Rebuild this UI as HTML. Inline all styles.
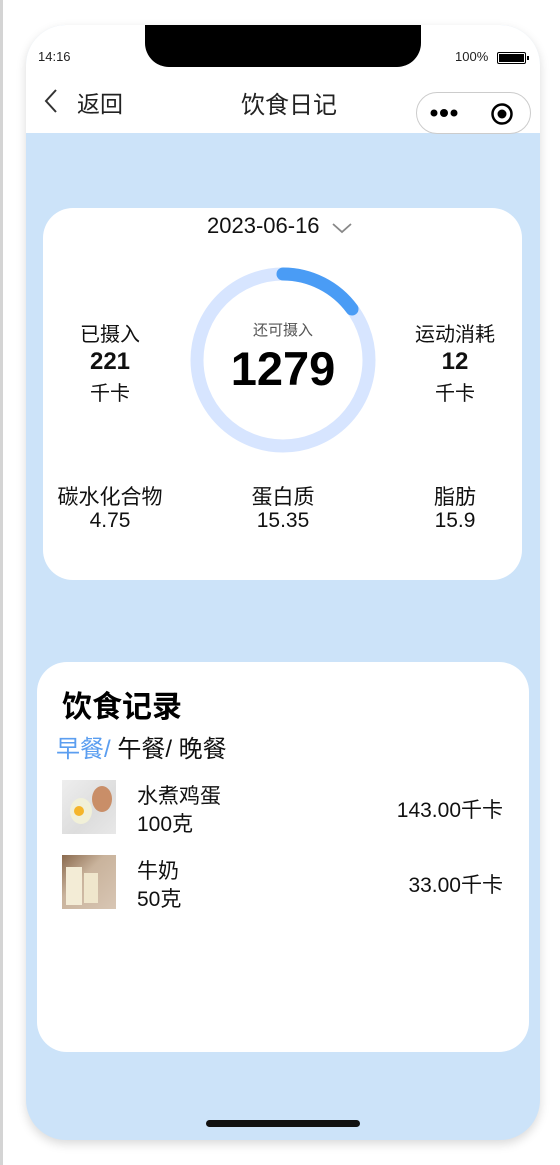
<!DOCTYPE html>
<html><head><meta charset="utf-8"><style>
*{margin:0;padding:0;box-sizing:border-box}
body{width:560px;height:1165px;background:#fff;font-family:"Liberation Sans","Noto Sans CJK SC",sans-serif;position:relative;overflow:hidden;color:#111}
.edge{position:absolute;left:0;top:0;width:3px;height:1165px;background:#d4d4d4}
.phone{position:absolute;left:26px;top:25px;width:514px;height:1115px;border-radius:40px;background:#cce3f9;overflow:hidden;box-shadow:0 4px 10px rgba(0,0,0,.15)}
.top{position:absolute;left:0;top:0;width:514px;height:108px;background:#fff}
.notch{position:absolute;left:119px;top:0;width:276px;height:42px;background:#000;border-radius:0 0 24px 24px}
.t{position:absolute;white-space:nowrap}
.card{position:absolute;background:#fff;border-radius:30px}
.c{text-align:center}
</style></head><body>
<div class="edge"></div>
<div class="phone">
 <div class="top">
  <div class="notch"></div>
  <div class="t" style="left:12px;top:24px;font-size:13px;color:#222">14:16</div>
  <div class="t" style="left:429px;top:24px;font-size:13px;color:#222">100%</div>
  <div style="position:absolute;left:471px;top:27px;width:29px;height:12px;border:1.5px solid #000;border-radius:2px;padding:1px"><div style="width:100%;height:100%;background:#000"></div></div>
  <div style="position:absolute;left:501px;top:31px;width:2px;height:4px;background:#000"></div>
  <svg class="t" style="left:16px;top:63px" width="20" height="26"><path d="M14 2 L4 13 L14 24" fill="none" stroke="#333" stroke-width="2"/></svg>
  <div class="t" style="left:51px;top:60px;font-size:23px;color:#222">返回</div>
  <div class="t" style="left:215px;top:60px;font-size:24px;color:#222">饮食日记</div>
  <div style="position:absolute;left:390px;top:67px;width:115px;height:42px;border:1px solid #ccc;border-radius:21px;background:#fff"></div>
  <svg class="t" style="left:402px;top:80px" width="40" height="16"><circle cx="6" cy="8" r="3.5"/><circle cx="16" cy="8" r="4"/><circle cx="26" cy="8" r="3.5"/></svg>
  <svg class="t" style="left:464px;top:77px" width="24" height="24"><circle cx="12" cy="12" r="9.5" fill="none" stroke="#000" stroke-width="2.5"/><circle cx="12" cy="12" r="4.5"/></svg>
 </div>
 <div class="card" style="left:17px;top:183px;width:479px;height:372px">
  <div class="t" style="left:164px;top:5px;font-size:22px;color:#111">2023-06-16</div>
  <svg class="t" style="left:288px;top:13px" width="22" height="14"><path d="M2 3 L11 11 L20 3" fill="none" stroke="#888" stroke-width="1.8"/></svg>
  <svg class="t" style="left:147px;top:59px" width="186" height="186"><circle cx="93" cy="93" r="86" fill="none" stroke="#d7e5ff" stroke-width="13"/><path d="M93 7 A86 86 0 0 1 162 42" fill="none" stroke="#4a9cf5" stroke-width="13" stroke-linecap="round"/></svg>
  <div class="t c" style="left:190px;width:100px;top:111px;font-size:15px;color:#555">还可摄入</div>
  <div class="t c" style="left:165px;width:150px;top:133px;font-size:47px;font-weight:bold;color:#000">1279</div>
  <div class="t c" style="left:17px;width:100px;top:110px;font-size:20px">已摄入</div>
  <div class="t c" style="left:17px;width:100px;top:140px;font-size:24px;font-weight:bold">221</div>
  <div class="t c" style="left:17px;width:100px;top:169px;font-size:20px">千卡</div>
  <div class="t c" style="left:362px;width:100px;top:110px;font-size:20px">运动消耗</div>
  <div class="t c" style="left:362px;width:100px;top:140px;font-size:24px;font-weight:bold">12</div>
  <div class="t c" style="left:362px;width:100px;top:169px;font-size:20px">千卡</div>
  <div class="t c" style="left:-3px;width:140px;top:273px;font-size:21px">碳水化合物</div>
  <div class="t c" style="left:-3px;width:140px;top:301px;font-size:21px">4.75</div>
  <div class="t c" style="left:170px;width:140px;top:273px;font-size:21px">蛋白质</div>
  <div class="t c" style="left:170px;width:140px;top:301px;font-size:21px">15.35</div>
  <div class="t c" style="left:342px;width:140px;top:273px;font-size:21px">脂肪</div>
  <div class="t c" style="left:342px;width:140px;top:301px;font-size:21px">15.9</div>
 </div>
 <div class="card" style="left:11px;top:637px;width:492px;height:390px">
  <div class="t" style="left:25px;top:20px;font-size:30px;font-weight:bold;color:#000">饮食记录</div>
  <div class="t" style="left:19px;top:67px;font-size:24px"><span style="color:#5b9ef0">早餐/</span> 午餐/ 晚餐</div>
  <div style="position:absolute;left:25px;top:118px;width:54px;height:54px;background:linear-gradient(135deg,#eee,#ddd 60%,#e8e8e8)"><div style="position:absolute;left:30px;top:6px;width:20px;height:26px;border-radius:50%;background:#c98e68"></div><div style="position:absolute;left:8px;top:18px;width:22px;height:26px;border-radius:50%;background:#f1f0d8"></div><div style="position:absolute;left:12px;top:26px;width:10px;height:10px;border-radius:50%;background:#f5b52a"></div></div>
  <div class="t" style="left:100px;top:118px;font-size:21px">水煮鸡蛋</div>
  <div class="t" style="left:100px;top:146px;font-size:21px">100克</div>
  <div class="t" style="right:26px;top:132px;font-size:21px">143.00千卡</div>
  <div style="position:absolute;left:25px;top:193px;width:54px;height:54px;background:linear-gradient(135deg,#8a6a4e,#c9b39c 40%,#d8c6b4)"><div style="position:absolute;left:4px;top:12px;width:16px;height:38px;background:#f3ecd6"></div><div style="position:absolute;left:22px;top:18px;width:14px;height:30px;background:#efe6cc"></div></div>
  <div class="t" style="left:100px;top:193px;font-size:21px">牛奶</div>
  <div class="t" style="left:100px;top:221px;font-size:21px">50克</div>
  <div class="t" style="right:26px;top:207px;font-size:21px">33.00千卡</div>
 </div>
 <div style="position:absolute;left:180px;top:1095px;width:154px;height:7px;border-radius:4px;background:#111"></div>
</div>
</body></html>
